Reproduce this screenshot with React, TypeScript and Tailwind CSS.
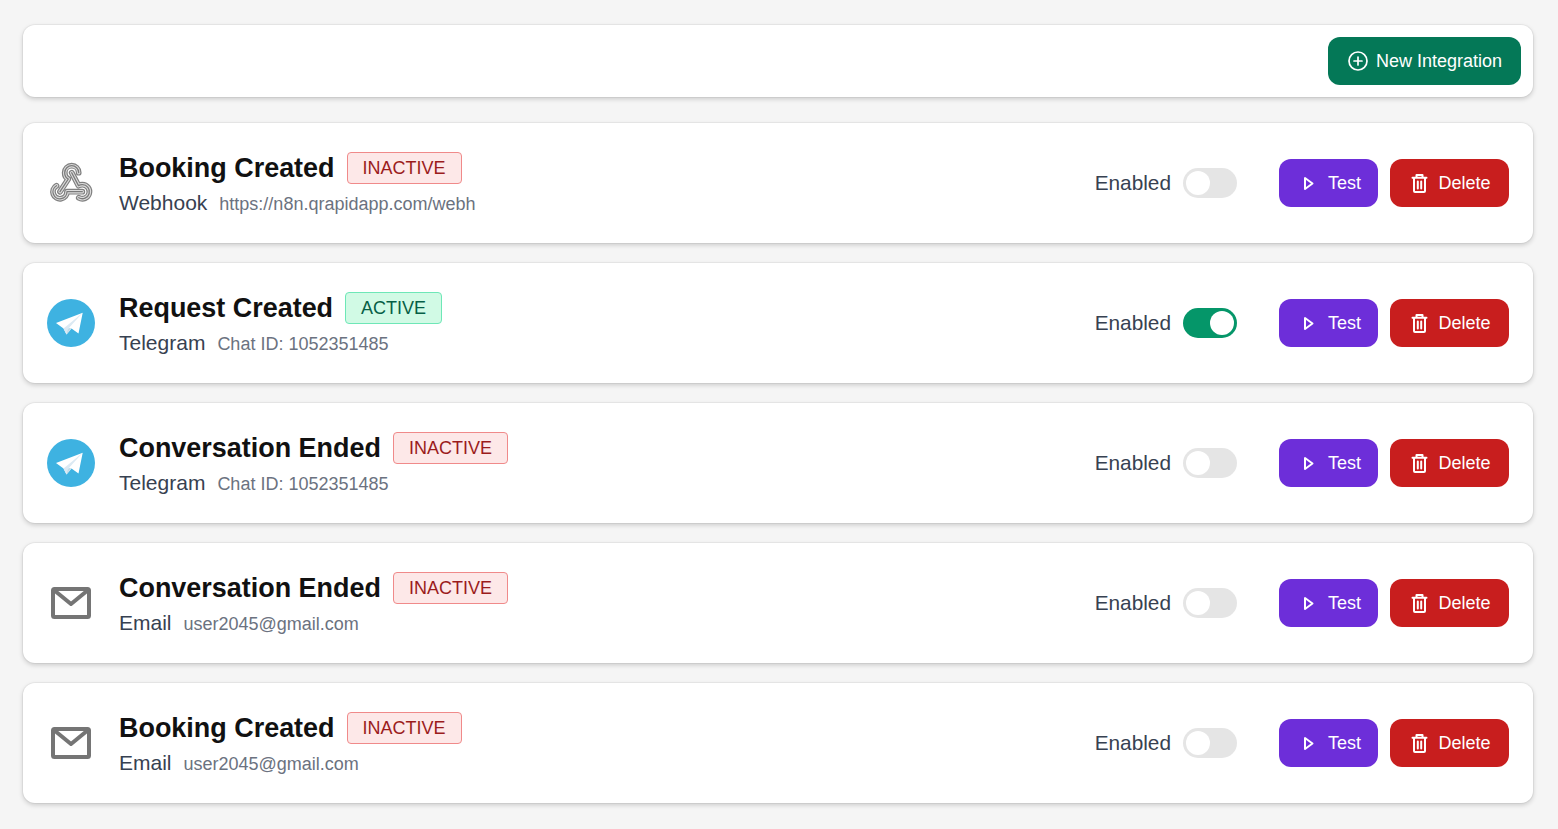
import React from "react";

const webhookPaths = (
  <>
    <path d="M9.500 26.700A7 7 0 1 0 20 32.700L35.300 32.700" />
    <path d="M31.800 38.700A7 7 0 1 0 35.300 25.700C33.900 25.700 32.500 26 31.500 26.600L24.700 13.700" />
    <path d="M31.700 13.700A7 7 0 1 0 17.700 13.700C17.700 16.500 19 19 21.300 20L13 32.700" />
  </>
);

const WebhookIcon = () => (
  <svg viewBox="0 0 48 48" className="h-12 w-12" fill="none" strokeLinecap="round" strokeLinejoin="round">
    <g stroke="#808080" strokeWidth="5.800">{webhookPaths}</g>
    <g stroke="#dcdcdc" strokeWidth="3.400">{webhookPaths}</g>
    <g stroke="#7a7a7a" strokeWidth="1.300">{webhookPaths}</g>
  </svg>
);

const TelegramIcon = () => (
  <svg viewBox="0 0 48 48" className="h-12 w-12">
    <circle cx="24" cy="24" r="24" fill="#3eb2e1" />
    <path d="M9 24 35.700 13.700 31.500 34.500 24.500 29.500 19.500 35.500 16.500 29.500z" fill="#ffffff" />
    <path d="M16.500 29.500 19.500 35.500 20.500 30.500 35.700 13.700z" fill="#dbe9f3" />
    <path d="M20.500 30.500 19.500 35.500 24.500 29.500 22 28.800z" fill="#c4dcea" />
  </svg>
);

const MailIcon = () => (
  <svg viewBox="0 0 48 48" className="h-12 w-12" fill="none" stroke="#757575" strokeWidth="4" strokeLinejoin="round" strokeLinecap="round">
    <rect x="6" y="10" width="36" height="28" rx="1.500" />
    <path d="M7.500 11.500 24 25 40.500 11.500" />
  </svg>
);

const PlusIcon = () => (
  <svg viewBox="0 0 20 20" className="h-5 w-5" fill="none" stroke="currentColor" strokeWidth="1.700" strokeLinecap="round">
    <circle cx="10" cy="10" r="9" />
    <path d="M10 6v8M6 10h8" />
  </svg>
);

const PlayIcon = () => (
  <svg viewBox="0 0 20 20" className="h-5 w-5" fill="none" stroke="currentColor" strokeWidth="2" strokeLinejoin="round">
    <path d="M9 5v11l7.500-5.500z" />
  </svg>
);

const TrashIcon = () => (
  <svg viewBox="0 0 20 20" className="h-5 w-5" fill="none" stroke="currentColor" strokeWidth="2" strokeLinecap="round" strokeLinejoin="round">
    <path d="M4.500 4.800h14M8.500 4.800V2h6v2.800M6 4.800V18a1 1 0 0 0 1 1h9a1 1 0 0 0 1-1V4.800M9.800 8.500v7M13.200 8.500v7" />
  </svg>
);

type Row = {
  title: string;
  active: boolean;
  kind: string;
  detail: string;
  icon: React.ReactNode;
};

const rows: Row[] = [
  { title: "Booking Created", active: false, kind: "Webhook", detail: "https://n8n.qrapidapp.com/webh", icon: <WebhookIcon /> },
  { title: "Request Created", active: true, kind: "Telegram", detail: "Chat ID: 1052351485", icon: <TelegramIcon /> },
  { title: "Conversation Ended", active: false, kind: "Telegram", detail: "Chat ID: 1052351485", icon: <TelegramIcon /> },
  { title: "Conversation Ended", active: false, kind: "Email", detail: "user2045@gmail.com", icon: <MailIcon /> },
  { title: "Booking Created", active: false, kind: "Email", detail: "user2045@gmail.com", icon: <MailIcon /> },
];

function Card({ row }: { row: Row }) {
  return (
    <div className="flex h-[120px] items-center rounded-xl bg-white px-6 shadow-[0_0_0_1px_rgba(0,0,0,0.04),0_2px_5px_rgba(0,0,0,0.18)]">
      <div className="flex w-12 shrink-0 justify-center">{row.icon}</div>
      <div className="ml-6 mt-[3px] flex min-w-0 flex-1 flex-col gap-[5px]">
        <div className="flex items-center gap-3">
          <span className="text-[26.95px] font-bold leading-8 text-[#111111]">{row.title}</span>
          {row.active ? (
            <span className="flex h-8 items-center rounded border border-[#6ee7b7] bg-[#d1fae5] px-[15px] text-lg text-[#065f46]">ACTIVE</span>
          ) : (
            <span className="flex h-8 items-center rounded border border-[#f08a8a] bg-[#fde8e8] px-[15px] text-lg text-[#9b1c1c]">INACTIVE</span>
          )}
        </div>
        <div className="flex items-baseline gap-3">
          <span className="text-[21px] leading-7 text-[#374151]">{row.kind}</span>
          <span className="text-lg text-[#6b7280]">{row.detail}</span>
        </div>
      </div>
      <div className="flex items-center gap-3">
        <span className="text-[20.8px] text-[#374151]">Enabled</span>
        <span
          className={
            row.active
              ? "flex h-[30px] w-[54px] items-center justify-end rounded-full bg-[#059669] px-[3px]"
              : "flex h-[30px] w-[54px] items-center justify-start rounded-full bg-[#e5e5e5] px-[3px]"
          }
        >
          <span className="h-6 w-6 rounded-full bg-white" />
        </span>
      </div>
      <button className="ml-[42px] flex h-12 w-[99px] items-center justify-center gap-3 rounded-xl bg-[#6d2ed9] text-lg text-white">
        <PlayIcon />
        Test
      </button>
      <button className="ml-3 flex h-12 w-[119px] items-center justify-center gap-2.5 rounded-xl bg-[#c81e1e] text-lg text-white">
        <TrashIcon />
        Delete
      </button>
    </div>
  );
}

export default function App() {
  return (
    <div className="flex min-h-[829px] flex-col bg-[#f5f5f5] pl-[23px] pr-[25px] pt-[25px] font-['Liberation_Sans',sans-serif]">
      <div className="mb-[26px] flex h-[72px] items-center justify-end rounded-xl bg-white px-3 shadow-[0_0_0_1px_rgba(0,0,0,0.04),0_2px_5px_rgba(0,0,0,0.18)]">
        <button className="flex h-12 w-[193px] items-center justify-center gap-2 rounded-xl bg-[#047857] pl-px text-lg text-white">
          <PlusIcon />
          New Integration
        </button>
      </div>
      <div className="flex flex-col gap-5">
        {rows.map((r, i) => (
          <Card key={i} row={r} />
        ))}
      </div>
    </div>
  );
}
